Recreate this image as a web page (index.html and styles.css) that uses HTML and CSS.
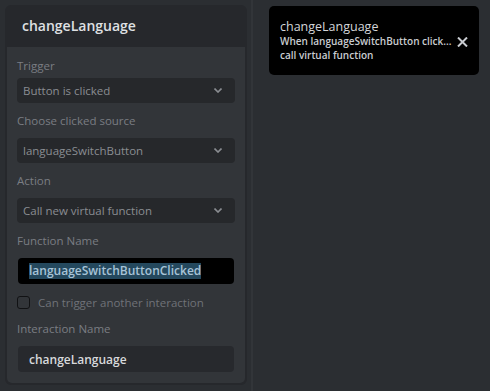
FILE: index.html
```html
<!DOCTYPE html>
<html lang="en">
<head>
  <meta charset="UTF-8">
  <meta name="viewport" content="width=device-width, initial-scale=1.0">
  <title>Interaction - changeLanguage</title>
  <link rel="stylesheet" href="styles.css">
</head>
<body>
  <div class="sidebar">
    <div class="panel">
      <div class="panel-header">changeLanguage</div>
      <div class="panel-body">
        <div class="field field-first">
          <label class="field-label">Trigger</label>
          <div class="select">
            <span>Button is clicked</span>
            <svg class="chevron" width="8" height="5" viewBox="0 0 8 5"><path d="M0.5 0.5 L4 4 L7.5 0.5" fill="none" stroke="#8a8d92" stroke-width="1.6"/></svg>
          </div>
        </div>
        <div class="field">
          <label class="field-label">Choose clicked source</label>
          <div class="select">
            <span>languageSwitchButton</span>
            <svg class="chevron" width="8" height="5" viewBox="0 0 8 5"><path d="M0.5 0.5 L4 4 L7.5 0.5" fill="none" stroke="#8a8d92" stroke-width="1.6"/></svg>
          </div>
        </div>
        <div class="field">
          <label class="field-label">Action</label>
          <div class="select">
            <span>Call new virtual function</span>
            <svg class="chevron" width="8" height="5" viewBox="0 0 8 5"><path d="M0.5 0.5 L4 4 L7.5 0.5" fill="none" stroke="#8a8d92" stroke-width="1.6"/></svg>
          </div>
        </div>
        <div class="field">
          <label class="field-label">Function Name</label>
          <div class="text-input text-input-focus"><span class="selected">languageSwitchButtonClicked</span></div>
        </div>
        <div class="check-row">
          <span class="checkbox"></span>
          <span class="check-label">Can trigger another interaction</span>
        </div>
        <div class="field field-last">
          <label class="field-label">Interaction Name</label>
          <div class="text-input">changeLanguage</div>
        </div>
      </div>
    </div>
  </div>
  <div class="stage">
    <div class="toast">
      <div class="toast-text">
        <div class="toast-title">changeLanguage</div>
        <div class="toast-line">When languageSwitchButton click...</div>
        <div class="toast-line">call virtual function</div>
      </div>
      <svg class="toast-close" width="11" height="10" viewBox="0 0 11 10"><path d="M1 0.5 L10 9.5 M10 0.5 L1 9.5" stroke="#c9ccd1" stroke-width="2"/></svg>
    </div>
  </div>
</body>
</html>
```

FILE: styles.css
```css
body {
  margin: 0;
  height: 391px;
  display: flex;
  background-color: #2b2e32;
  font-family: "Open Sans", "Noto Sans", Arial, sans-serif;
  overflow: hidden;
}
.sidebar {
  width: 253px;
  flex-shrink: 0;
  padding: 5px 0 0 5px;
  box-sizing: border-box;
  border-right: 2px solid #323539;
}
.panel {
  width: 242px;
  height: 380px;
  background: #26282c;
  border-radius: 6px;
  padding: 0 2px 2px;
  box-sizing: border-box;
  display: flex;
  flex-direction: column;
}
.panel-header {
  height: 42px;
  line-height: 42px;
  padding-left: 15px;
  color: #dfe0e3;
  font-size: 14px;
  font-weight: 600;
  flex-shrink: 0;
}
.panel-body {
  flex: 1;
  background: #323539;
  border-radius: 0 0 5px 5px;
  padding: 2px 10px 0;
}
.field {
  margin-top: 11px;
}
.field-label {
  display: block;
  height: 14px;
  line-height: 14px;
  font-size: 11.5px;
  color: #7a7d83;
  margin-bottom: 10px;
}
.field-first {
  margin-top: 10px;
}
.field-first .field-label {
  margin-bottom: 5px;
}
.field-last {
  margin-top: 13px;
}
.select {
  height: 25px;
  background: #26282b;
  border-radius: 4px;
  padding: 0 13px 0 6px;
  display: flex;
  align-items: center;
  justify-content: space-between;
  font-size: 11.5px;
  color: #8a8d92;
}
.text-input {
  height: 26px;
  margin: 0 1px;
  background: #27292d;
  border-radius: 4px;
  padding: 0 11px;
  display: flex;
  align-items: center;
  font-size: 12px;
  font-weight: 600;
  color: #d8d9dc;
}
.text-input-focus {
  background: #000;
}
.selected {
  background: #24485d;
  color: #a7c3d7;
  line-height: 16px;
}
.check-row {
  display: flex;
  align-items: center;
  margin-top: 11px;
  height: 14px;
}
.checkbox {
  width: 11px;
  height: 11px;
  border: 1.5px solid #111214;
  border-radius: 3px;
  margin-right: 8px;
}
.check-label {
  font-size: 11.5px;
  color: #6f7278;
}
.stage {
  flex: 1;
  padding: 6px 0 0 16px;
}
.toast {
  width: 210px;
  height: 69px;
  background: #000;
  border-radius: 5px;
  box-sizing: border-box;
  padding: 13px 11px 0 11px;
  display: flex;
  justify-content: space-between;
  align-items: flex-start;
}
.toast-title {
  font-size: 12.5px;
  line-height: 15px;
  color: #d4d6d9;
}
.toast-line {
  font-size: 10px;
  font-weight: 600;
  line-height: 14px;
  color: #c9ccd0;
}
.toast-close {
  margin-top: 18px;
}
```
